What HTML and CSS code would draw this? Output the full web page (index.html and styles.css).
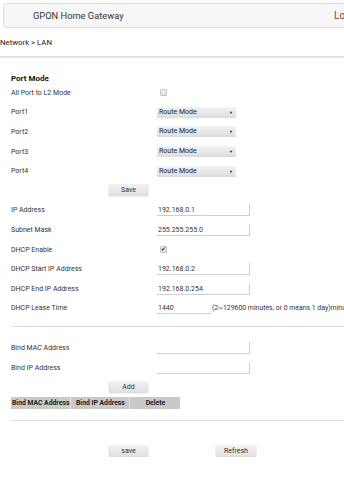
FILE: index.html
```html
<!DOCTYPE html>
<html lang="en">
<head>
    <meta charset="UTF-8">
    <meta name="viewport" content="width=device-width, initial-scale=1.0">
    <title>LAN</title>
    <link rel="stylesheet" href="styles.css">
</head>
<body>

    <div class="topbar">
        <span class="brand">GPON Home Gateway</span>
        <span class="logout">Logout</span>
    </div>

    <div class="crumb">Network &gt; LAN</div>
    <div class="rule"></div>

    <div class="content">
        <div class="section-title">Port Mode</div>

        <div class="form">
            <label>All Port to L2 Mode</label>
            <div><input type="checkbox" class="chk"></div>

            <label>Port1</label>
            <div><span class="sel">Route Mode</span></div>
            <label>Port2</label>
            <div><span class="sel">Route Mode</span></div>
            <label>Port3</label>
            <div><span class="sel">Route Mode</span></div>
            <label>Port4</label>
            <div><span class="sel">Route Mode</span></div>

            <div class="btn-row"><button class="btn">Save</button></div>

            <label>IP Address</label>
            <div><span class="field">192.168.0.1</span></div>
            <label>Subnet Mask</label>
            <div><span class="field">255.255.255.0</span></div>
            <label>DHCP Enable</label>
            <div><input type="checkbox" class="chk" checked></div>
            <label>DHCP Start IP Address</label>
            <div><span class="field">192.168.0.2</span></div>
            <label>DHCP End IP Address</label>
            <div><span class="field">192.168.0.254</span></div>
            <label>DHCP Lease Time</label>
            <div class="lease"><span class="field short">1440</span><span class="hint">(2~129600 minutes, or 0 means 1 day)minutes</span></div>
        </div>

        <div class="line"></div>

        <div class="form bind">
            <label>Bind MAC Address</label>
            <div><span class="field"></span></div>
            <label>Bind IP Address</label>
            <div><span class="field"></span></div>
            <div class="btn-row"><button class="btn">Add</button></div>
        </div>

        <table class="bind-table">
            <tr>
                <th class="c1">Bind MAC Address</th>
                <th class="c2">Bind IP Address</th>
                <th class="c3">Delete</th>
            </tr>
        </table>

        <div class="line"></div>

        <div class="actions">
            <button class="btn">save</button>
            <button class="btn">Refresh</button>
        </div>
    </div>

</body>
</html>
```

FILE: styles.css
```css
html, body {
    margin: 0;
    overflow: hidden;
}
body {
    font-family: Roboto, "Liberation Sans", sans-serif;
    font-size: 7px;
    color: #333;
    background: #fff;
    width: 420px;
}
.topbar {
    margin: 3px 0 0 3px;
    width: 400px;
    height: 25px;
    box-sizing: border-box;
    border: 1px solid #dcdcdc;
    border-radius: 4px;
    background: #f7f7f7;
    display: flex;
    align-items: center;
    padding-left: 29px;
    font-size: 9.3px;
    color: #333;
}
.brand {
    width: 301px;
    flex: none;
}
.logout {
    color: #a0302c;
    font-size: 10px;
}
.crumb {
    margin-top: 9px;
    height: 12px;
    line-height: 12px;
    font-size: 7.8px;
    color: #222;
}
.rule {
    margin-top: 7px;
    height: 2px;
    background: #e2e2e2;
}
.content {
    padding-left: 11px;
}
.section-title {
    margin-top: 15px;
    height: 10px;
    line-height: 12px;
    font-size: 8px;
    font-weight: bold;
    color: #111;
}
.form {
    display: grid;
    grid-template-columns: 146px 1fr;
    grid-auto-rows: 19.6px;
    align-items: center;
}
.form label {
    color: #333;
}
.btn-row {
    grid-column: 1 / 3;
    padding-left: 98px;
}
.btn {
    width: 39px;
    height: 11px;
    padding: 0;
    border: none;
    border-radius: 0;
    background: linear-gradient(#f2f2f2, #dedede);
    box-shadow: 0 0 0 1px #f0f0f0;
    font-family: Roboto, "Liberation Sans", sans-serif;
    font-size: 7px;
    color: #333;
    line-height: 11px;
}
.chk {
    appearance: none;
    -webkit-appearance: none;
    position: relative;
    margin: 0 0 0 3px;
    width: 7px;
    height: 7px;
    box-sizing: border-box;
    border: 1px solid #c8c8c8;
    border-radius: 1px;
    background: linear-gradient(#f4f4f4, #dcdcdc);
    vertical-align: middle;
}
.chk:checked::after {
    content: "\2714";
    position: absolute;
    left: 0;
    top: -2px;
    font-size: 6px;
    color: #222;
}
.sel {
    position: relative;
    display: block;
    width: 79px;
    height: 11px;
    box-sizing: border-box;
    padding-left: 2px;
    line-height: 11px;
    background: linear-gradient(#f4f4f4, #dcdcdc);
    color: #222;
}
.sel::after {
    content: "\25BC";
    position: absolute;
    right: 3px;
    top: 0;
    font-size: 4px;
    color: #222;
}
.field {
    display: block;
    width: 93px;
    height: 12px;
    box-sizing: border-box;
    padding-left: 1px;
    line-height: 12px;
    border-right: 1px solid #cfcfcf;
    border-bottom: 1px solid #cfcfcf;
    color: #333;
}
.lease {
    display: flex;
    align-items: center;
    white-space: nowrap;
}
.field.short {
    width: 54px;
    flex: none;
    border-right: none;
}
.hint {
    margin-left: 1px;
    font-size: 6.9px;
}
.line {
    height: 1px;
    margin-top: 8px;
    background: #dcdbe6;
}
.bind {
    margin-top: 11px;
}
.bind-table {
    border-collapse: collapse;
    background: #c9c9c9;
}
.bind-table th {
    height: 12px;
    padding: 0 1px;
    font-size: 6.8px;
    font-weight: bold;
    color: #222;
    white-space: nowrap;
    border-right: 1px solid #e4e4e4;
    text-align: center;
}
.bind-table .c1 { width: 57px; }
.bind-table .c2 { width: 56px; }
.bind-table .c3 { width: 48px; border-right: none; }
.bind-table + .line {
    margin-top: 11px;
}
.actions {
    margin-top: 25px;
    padding-left: 98px;
    display: flex;
    gap: 68px;
}
.actions .btn:last-child {
    width: 40px;
}
```
